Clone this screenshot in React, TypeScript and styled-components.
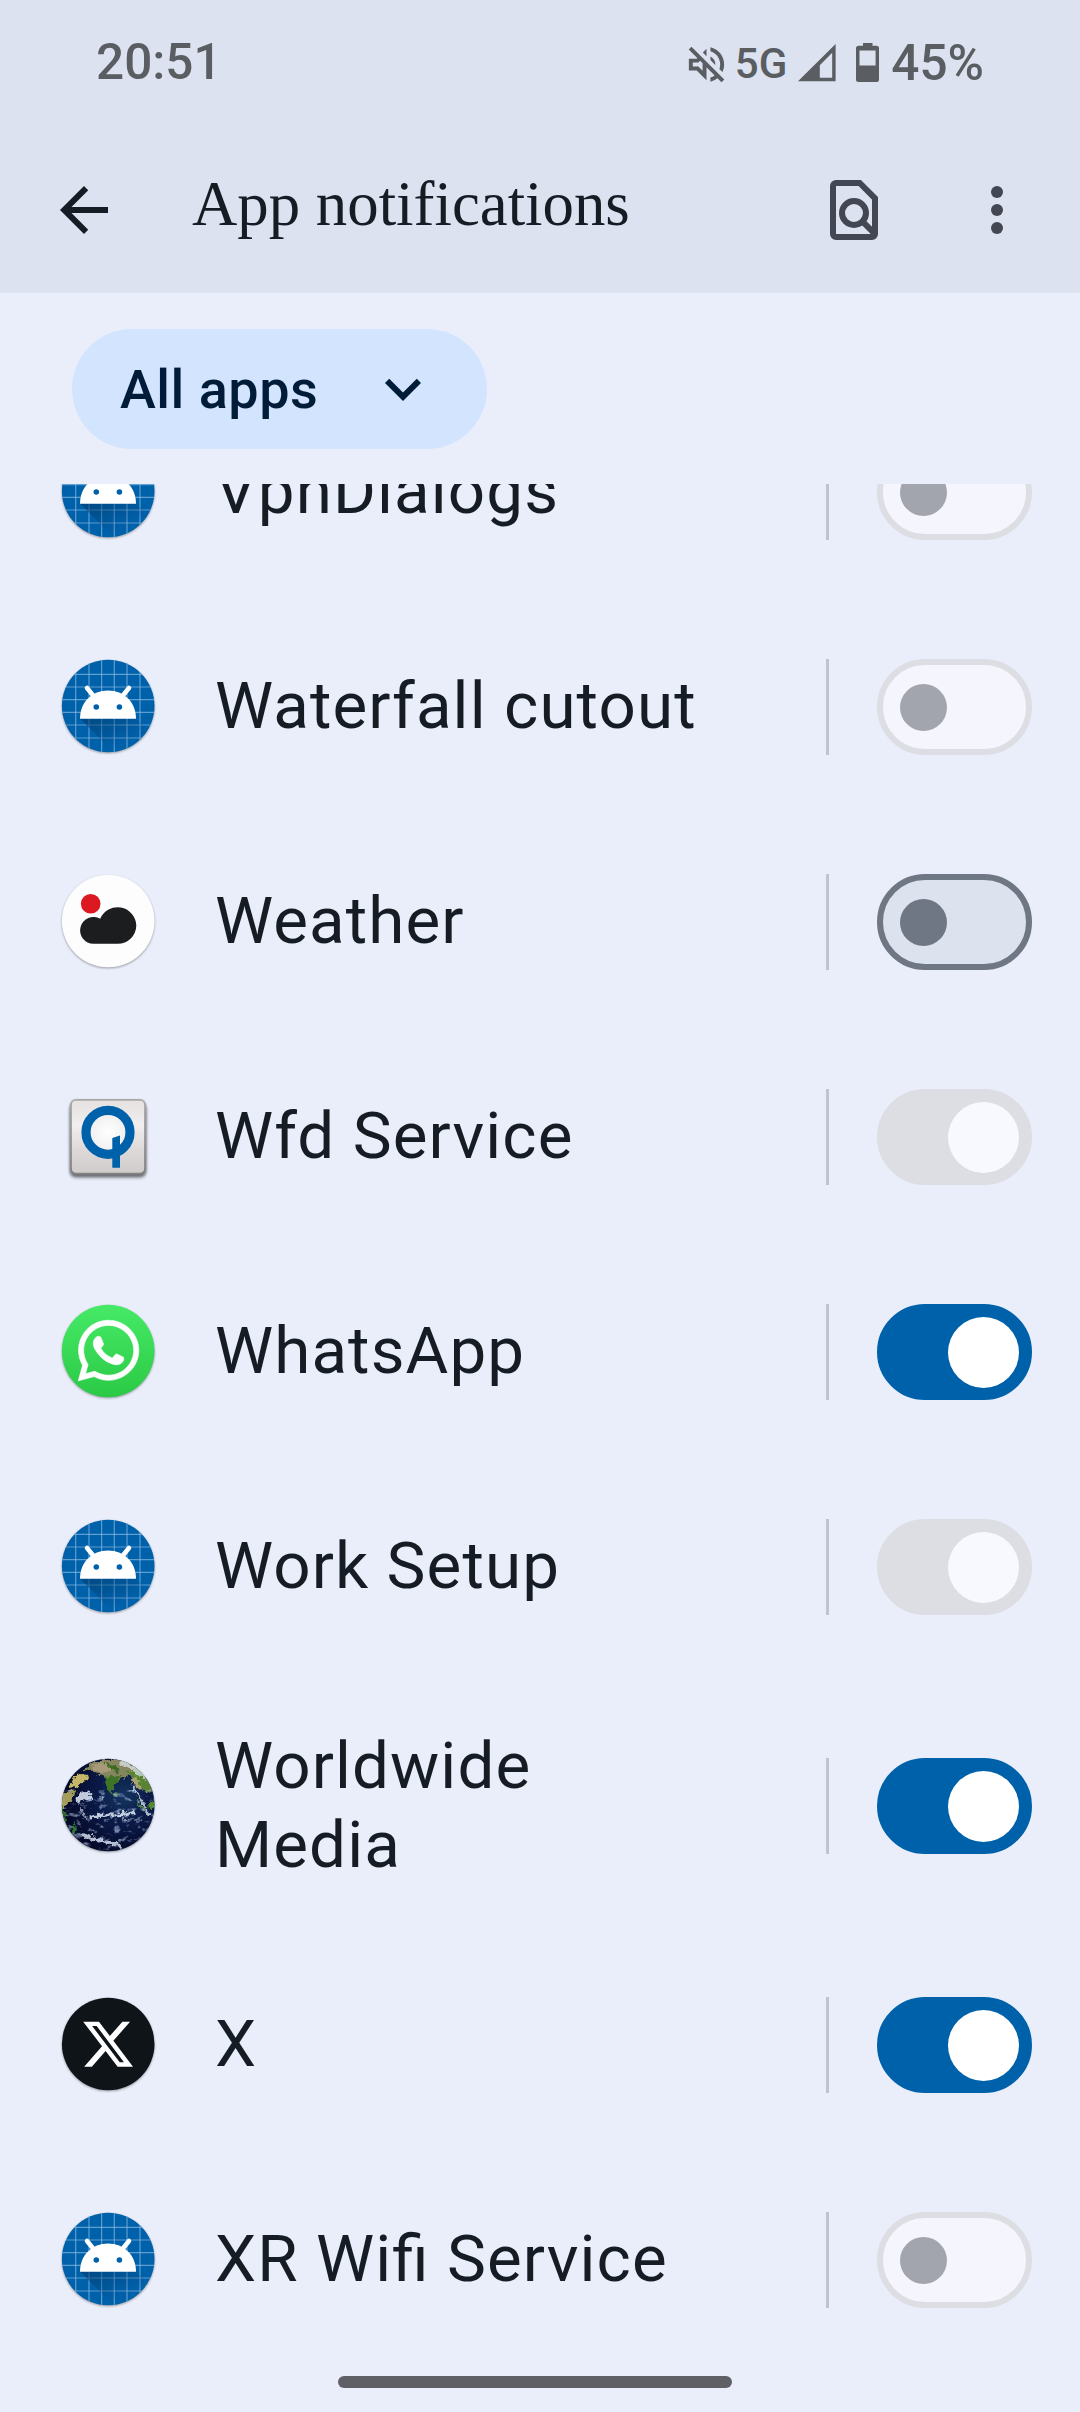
import React, { useState } from 'react';
import styled, { createGlobalStyle, css } from 'styled-components';
import { FaWhatsapp } from 'react-icons/fa';

const GlobalStyle = createGlobalStyle`
  *, *::before, *::after { box-sizing: border-box; }
  body { margin: 0; background: #e9eefa; }
  button { border: 0; padding: 0; background: none; font: inherit; color: inherit; cursor: pointer; }
  svg { display: block; }
`;

const Screen = styled.div`
  display: flex;
  flex-direction: column;
  width: 1080px;
  height: 2412px;
  overflow: hidden;
  background: #e9eefa;
  color: #161c24;
  font-family: Roboto, 'Noto Sans', sans-serif;
`;

const Header = styled.header`
  flex: none;
  height: 293px;
  background: #dce2f0;
`;

const StatusBar = styled.div`
  display: flex;
  justify-content: space-between;
  align-items: center;
  height: 124px;
  padding: 0 96px;
  color: #5a5d61;
  font-weight: 500;
  font-size: 49.5px;
  line-height: 1;
`;

const Clock = styled.span`
  padding-top: 2px;
`;

const StatusIcons = styled.div`
  display: flex;
  align-items: center;
  padding-top: 4px;
`;

const NetworkType = styled.span`
  margin-left: 5px;
  font-size: 42px;
`;

const SignalIcon = styled.svg`
  margin-left: 11px;
`;

const BatteryIcon = styled.svg`
  margin: 0 12px 0 20px;
`;

const Toolbar = styled.div`
  display: flex;
  align-items: center;
  height: 169px;
  padding: 3px 47px 0 48px;
`;

const IconButton = styled.button`
  display: flex;
  width: 72px;
  height: 72px;
  color: #424753;
`;

const BackButton = styled(IconButton)`
  color: #161c24;
`;

const Title = styled.h1`
  flex: 1;
  margin: 0 0 13px 72px;
  font-family: 'Liberation Serif', serif;
  font-weight: 400;
  font-size: 62.8px;
  line-height: 80px;
`;

const Actions = styled.div`
  display: flex;
  gap: 71px;
`;

const FilterBar = styled.div`
  flex: none;
  height: 191px;
  padding: 36px 72px 0;
`;

const FilterChip = styled.button`
  display: flex;
  align-items: center;
  justify-content: space-between;
  width: 415px;
  height: 120px;
  padding: 0 48px;
  border-radius: 60px;
  background: #d3e4ff;
  color: #001c38;
  font-weight: 500;
  font-size: 54px;
  letter-spacing: 0.5px;
`;

const List = styled.ul`
  flex: 1;
  margin: 0;
  padding: 0;
  overflow: hidden;
  list-style: none;
`;

const Row = styled.li<{ $tall?: boolean }>`
  display: flex;
  align-items: center;
  height: ${(p) => (p.$tall ? 263 : 215)}px;
  padding: 1px 48px 0 60px;

  &:first-child { margin-top: -100px; }
`;

const AppIcon = styled.svg`
  flex: none;
  width: 96px;
  height: 96px;
  overflow: visible;
  filter: drop-shadow(0 1.5px 1px rgba(0, 0, 0, 0.35));
`;

const AppName = styled.span`
  width: 531px;
  margin-left: 59px;
  padding-bottom: 3px;
  font-size: 65.5px;
  line-height: 79px;
  letter-spacing: 1.1px;
  font-feature-settings: 'liga' 1;
`;

const NameText = styled.span<{ $narrow?: boolean }>`
  display: block;
  width: ${(p) => (p.$narrow ? '400px' : 'auto')};
`;

const Divider = styled.span`
  width: 3px;
  height: 96px;
  margin-left: 80px;
  background: #c0c4d1;
`;

type Tone = { on: boolean; locked: boolean };

const trackColors = ({ on, locked }: Tone) => {
  if (on) return locked ? ['#dddee3', '#dddee3'] : ['#0061ab', '#0061ab'];
  return locked ? ['#f4f5fd', '#dddee3'] : ['#dce2ee', '#707784'];
};

const thumbColor = ({ on, locked }: Tone) => {
  if (on) return locked ? '#f8f9fe' : '#ffffff';
  return locked ? '#a2a5ae' : '#707784';
};

const Track = styled.button<{ $tone: Tone }>`
  display: flex;
  align-items: center;
  flex: none;
  width: 155px;
  height: 96px;
  margin-left: 48px;
  border-radius: 48px;
  ${({ $tone }) => {
    const [fill, edge] = trackColors($tone);
    return css`
      justify-content: ${$tone.on ? 'flex-end' : 'flex-start'};
      padding: ${$tone.on ? '0 7px' : '0 17px'};
      border: 6px solid ${edge};
      background: ${fill};
    `;
  }}
`;

const Thumb = styled.span<{ $tone: Tone }>`
  width: ${({ $tone }) => ($tone.on ? 71 : 47)}px;
  height: ${({ $tone }) => ($tone.on ? 71 : 47)}px;
  border-radius: 50%;
  background: ${({ $tone }) => thumbColor($tone)};
`;

const NavArea = styled.div`
  flex: none;
  display: flex;
  justify-content: center;
  height: 36px;
  margin-right: 10px;
`;

const NavHandle = styled.span`
  width: 394px;
  height: 12px;
  border-radius: 6px;
  background: #5f6065;
`;

const gridX = [15.7, 29, 41.6, 54.3, 67, 80];
const gridY = [15.3, 28, 40.7, 53.3, 66, 79];

function AndroidIcon({ id }: { id: string }) {
  return (
    <AppIcon viewBox="0 0 96 96">
      <defs>
        <clipPath id={`${id}-clip`}>
          <circle cx="48.2" cy="47" r="46.3" />
        </clipPath>
        <linearGradient id={`${id}-shade`} x1="36" y1="56" x2="54" y2="90" gradientUnits="userSpaceOnUse">
          <stop offset="0" stopColor="#003a6b" stopOpacity="0.6" />
          <stop offset="1" stopColor="#003a6b" stopOpacity="0" />
        </linearGradient>
      </defs>
      <g clipPath={`url(#${id}-clip)`}>
        <rect width="96" height="96" fill="#0061ab" />
        <g stroke="#8fbde4" strokeOpacity="0.65" strokeWidth="1.2">
          {gridX.map((x) => (
            <line key={x} x1={x} x2={x} y1="0" y2="96" />
          ))}
          {gridY.map((y) => (
            <line key={y} x1="0" x2="96" y1={y} y2={y} />
          ))}
        </g>
        <path d="M20 59.5H76L92 76V96H56Z" fill={`url(#${id}-shade)`} />
      </g>
      <path d="M20 59.8C20 43 32 31.4 48 31.4S76 43 76 59.8Z" fill="#fff" />
      <path d="M27 29 34 37.5M69 29 62 37.5" stroke="#fff" strokeWidth="4.6" strokeLinecap="round" />
      <circle cx="36.3" cy="48" r="2.8" fill="#0061ab" />
      <circle cx="59.4" cy="48" r="2.8" fill="#0061ab" />
    </AppIcon>
  );
}

function WeatherIcon() {
  return (
    <AppIcon viewBox="0 0 96 96">
      <circle cx="48.2" cy="47" r="46.3" fill="#fdfdfd" />
      <circle cx="30.7" cy="29.7" r="9.8" fill="#dc1821" />
      <path
        d="M33.4 69.8A13.4 13.4 0 1 1 40.2 44.8A18.8 18.8 0 0 1 76.3 51.3A18.6 18.6 0 0 1 57.7 69.8Z"
        fill="#1c1d1f"
      />
    </AppIcon>
  );
}

function WfdIcon() {
  return (
    <AppIcon viewBox="0 0 96 96">
      <defs>
        <linearGradient id="wfd-face" x1="0" y1="0" x2="0" y2="1">
          <stop offset="0" stopColor="#e4e1e0" />
          <stop offset="0.35" stopColor="#f0eeee" />
          <stop offset="0.7" stopColor="#dcd8d7" />
          <stop offset="1" stopColor="#d0cccb" />
        </linearGradient>
        <linearGradient id="wfd-edge" x1="0" y1="0" x2="0" y2="1">
          <stop offset="0" stopColor="#aba9a8" />
          <stop offset="1" stopColor="#858382" />
        </linearGradient>
        <radialGradient id="wfd-glow">
          <stop offset="0" stopColor="#ffffff" />
          <stop offset="1" stopColor="#efeded" />
        </radialGradient>
        <filter id="wfd-soft" x="-20%" y="-20%" width="140%" height="140%">
          <feGaussianBlur stdDeviation="1.8" />
        </filter>
      </defs>
      <rect x="10" y="14" width="76" height="74" rx="6" fill="#55565b" opacity="0.7" filter="url(#wfd-soft)" />
      <rect x="11" y="10.8" width="74" height="73.8" rx="5" fill="url(#wfd-face)" stroke="url(#wfd-edge)" strokeWidth="1.8" />
      <circle cx="48" cy="43.3" r="22" fill="url(#wfd-glow)" stroke="#0061ab" strokeWidth="9.2" />
      <path d="M52.3 49 60 46.6V78.7H52.3Z" fill="#0061ab" />
    </AppIcon>
  );
}

function WhatsAppIcon() {
  return (
    <AppIcon viewBox="0 0 96 96">
      <defs>
        <linearGradient id="wa-fill" x1="0" y1="0" x2="0" y2="1">
          <stop offset="0" stopColor="#46ea66" />
          <stop offset="1" stopColor="#2bc946" />
        </linearGradient>
      </defs>
      <circle cx="48.2" cy="47" r="46.3" fill="url(#wa-fill)" />
      <FaWhatsapp x="14" y="12" size={69.1} color="#fff" strokeWidth="5" />
    </AppIcon>
  );
}

function GlobeIcon() {
  return (
    <AppIcon viewBox="0 0 96 96">
      <defs>
        <clipPath id="globe-clip">
          <circle cx="48.2" cy="47" r="46.3" />
        </clipPath>
        <radialGradient id="globe-sea" cx="0.66" cy="0.4" r="0.6">
          <stop offset="0" stopColor="#143560" />
          <stop offset="0.45" stopColor="#0a1a48" />
          <stop offset="1" stopColor="#050a2a" />
        </radialGradient>
        <filter id="globe-clouds" x="0" y="0" width="100%" height="100%" colorInterpolationFilters="sRGB">
          <feTurbulence type="fractalNoise" baseFrequency="0.13 0.2" numOctaves="4" seed="8" />
          <feColorMatrix values="0 0 0 0 0.75  0 0 0 0 0.82  0 0 0 0 0.95  4 0 0 0 -2.2" />
        </filter>
        <filter id="globe-rough" x="-10%" y="-10%" width="120%" height="120%" colorInterpolationFilters="sRGB">
          <feTurbulence type="fractalNoise" baseFrequency="0.2" numOctaves="3" seed="3" result="n" />
          <feDisplacementMap in="SourceGraphic" in2="n" scale="8" xChannelSelector="R" yChannelSelector="G" />
          <feGaussianBlur stdDeviation="0.6" />
        </filter>
      </defs>
      <g clipPath="url(#globe-clip)">
        <rect width="96" height="96" fill="url(#globe-sea)" />
        <g filter="url(#globe-rough)">
          <path d="M8 30 14 20 17 14 22 17 29 18 24 24 16 29Z" fill="#c6b668" />
          <path d="M24 12 34 2H76L94 24V34L84 33 76 25 70 18 62 20 55 25 52 35 48 31 44 18 34 14Z" fill="#85855f" />
          <path d="M44 19 60 17 59 22 54 28 51 37 47 29Z" fill="#3f7426" />
          <path d="M30 9 44 3 54 10 42 15Z" fill="#a89a78" />
          <path d="M42 3 56 8 60 14 52 12Z" fill="#3a6b21" />
          <path d="M66 14 80 10 92 27 90 35 80 29 74 20Z" fill="#588432" />
          <path d="M70 20 77 19 82 34 76 29Z" fill="#a7a56d" />
          <circle cx="54.8" cy="36.5" r="1.8" fill="#3f7426" />
          <path d="M2 36 16 32 12 40 5 48 1 53Z" fill="#a49c5a" />
          <path d="M1 49 5 52 6 64 2 64Z" fill="#2d6b2a" />
          <path d="M10 67 15 64 16 73 12 79Z" fill="#2c7a35" />
          <path d="M75 41 79 44 86 53 83 54Z" fill="#5c8c46" />
          <path d="M89 46 94 43V51L90 52Z" fill="#538a2a" />
        </g>
        <g fill="none" stroke="#e3ebf7" strokeLinecap="round" filter="url(#globe-rough)">
          <path d="M20 40 27 38" strokeWidth="9" strokeOpacity="0.85" />
          <path d="M31 60C42 54 55 60 74 54" strokeWidth="3" strokeOpacity="0.85" />
          <path d="M23 77C36 84 52 82 62 89" strokeWidth="3.5" strokeOpacity="0.8" />
          <path d="M72 27 77 36 84 46 88 55" strokeWidth="2.6" strokeOpacity="0.75" />
          <path d="M62 4 72 9 84 18" strokeWidth="5" strokeOpacity="0.7" />
          <path d="M21 51 26 60M45 42 40 38" strokeWidth="2" strokeOpacity="0.6" />
          <path d="M58 56 66 63 84 63" strokeWidth="1.2" strokeOpacity="0.6" />
        </g>
        <rect y="32" width="96" height="64" filter="url(#globe-clouds)" opacity="0.6" />
      </g>
    </AppIcon>
  );
}

function XIcon() {
  return (
    <AppIcon viewBox="0 0 96 96">
      <circle cx="48.2" cy="47" r="46.3" fill="#0f1418" />
      <path
        transform="translate(23.2 22.3) scale(2.075)"
        fill="#fff"
        d="M18.901 1.153h3.68l-8.04 9.19L24 22.846h-7.406l-5.8-7.584-6.638 7.584H.474l8.6-9.83L0 1.154h7.594l5.243 6.932ZM17.61 20.644h2.039L6.486 3.24H4.298Z"
      />
    </AppIcon>
  );
}

type App = {
  name: string;
  icon: React.ReactNode;
  on: boolean;
  locked: boolean;
  wraps?: boolean;
};

const apps: App[] = [
  { name: 'VpnDialogs', icon: <AndroidIcon id="vpn" />, on: false, locked: true },
  { name: 'Waterfall cutout', icon: <AndroidIcon id="waterfall" />, on: false, locked: true },
  { name: 'Weather', icon: <WeatherIcon />, on: false, locked: false },
  { name: 'Wfd Service', icon: <WfdIcon />, on: true, locked: true },
  { name: 'WhatsApp', icon: <WhatsAppIcon />, on: true, locked: false },
  { name: 'Work Setup', icon: <AndroidIcon id="work" />, on: true, locked: true },
  { name: 'Worldwide Media', icon: <GlobeIcon />, on: true, locked: false, wraps: true },
  { name: 'X', icon: <XIcon />, on: true, locked: false },
  { name: 'XR Wifi Service', icon: <AndroidIcon id="xr" />, on: false, locked: true },
];

function AppRow({ app }: { app: App }) {
  const [on, setOn] = useState(app.on);
  const tone = { on, locked: app.locked };
  return (
    <Row $tall={app.wraps}>
      {app.icon}
      <AppName>
        <NameText $narrow={app.wraps}>{app.name}</NameText>
      </AppName>
      <Divider />
      <Track
        role="switch"
        aria-checked={on}
        aria-label={app.name}
        disabled={app.locked}
        $tone={tone}
        onClick={() => setOn(!on)}
      >
        <Thumb $tone={tone} />
      </Track>
    </Row>
  );
}

export default function App() {
  return (
    <>
      <GlobalStyle />
      <Screen>
        <Header>
          <StatusBar>
            <Clock>20:51</Clock>
            <StatusIcons>
              <svg width="47" height="47" viewBox="0 0 24 24" fill="currentColor">
                <path d="M4.34 2.93 2.93 4.34 7.29 8.7 7 9H3v6h4l5 5v-6.59l4.18 4.18c-.65.49-1.38.88-2.18 1.11v2.06a8.94 8.94 0 0 0 3.61-1.75l2.05 2.05 1.41-1.41zM10 15.17 7.83 13H5v-2h2.83l.88-.88L10 11.41zM19 12c0 .82-.15 1.61-.41 2.34l1.53 1.53c.56-1.17.88-2.48.88-3.87 0-4.28-2.99-7.86-7-8.77v2.06c2.89.86 5 3.54 5 6.71m-7-8-1.88 1.88L12 7.76zm4.5 8A4.5 4.5 0 0 0 14 7.97v1.79l2.48 2.48c.01-.08.02-.16.02-.24" />
              </svg>
              <NetworkType>5G</NetworkType>
              <SignalIcon width="38" height="48" viewBox="0 0 38 48" fill="currentColor" fillRule="evenodd">
                <path d="M0 41.3 37.6 4V41.3ZM21.8 25.2V37.7H34.2V12.8Z" />
              </SignalIcon>
              <BatteryIcon width="23" height="48" viewBox="0 0 23 48" fill="currentColor" fillRule="evenodd">
                <path d="M7 3H16.5V5.7H20.5A2.5 2.5 0 0 1 23 8.2V39.5A2.5 2.5 0 0 1 20.5 42H2.5A2.5 2.5 0 0 1 0 39.5V8.2A2.5 2.5 0 0 1 2.5 5.7H7ZM3.5 10.5V25.4H19.6V10.5Z" />
              </BatteryIcon>
              <span>45%</span>
            </StatusIcons>
          </StatusBar>
          <Toolbar>
            <BackButton aria-label="Back">
              <svg width="72" height="72" viewBox="0 0 24 24" fill="currentColor">
                <path d="M20 11H7.83l5.59-5.59L12 4l-8 8 8 8 1.41-1.41L7.83 13H20z" />
              </svg>
            </BackButton>
            <Title>App notifications</Title>
            <Actions>
              <IconButton aria-label="Search">
                <svg width="72" height="72" viewBox="0 0 24 24" fill="none" stroke="currentColor" strokeWidth="2">
                  <path d="M13.9 3H6a1 1 0 0 0-1 1v16a1 1 0 0 0 1 1h12a1 1 0 0 0 1-1V8.1Z" />
                  <circle cx="12" cy="13" r="4" />
                  <path d="m14.8 15.8 4 4" />
                </svg>
              </IconButton>
              <IconButton aria-label="More options">
                <svg width="72" height="72" viewBox="0 0 24 24" fill="currentColor">
                  <circle cx="12" cy="6" r="2" />
                  <circle cx="12" cy="12" r="2" />
                  <circle cx="12" cy="18" r="2" />
                </svg>
              </IconButton>
            </Actions>
          </Toolbar>
        </Header>
        <FilterBar>
          <FilterChip>
            All apps
            <svg width="72" height="72" viewBox="0 0 24 24" fill="currentColor">
              <path d="M16.59 8.59 12 13.17 7.41 8.59 6 10l6 6 6-6z" />
            </svg>
          </FilterChip>
        </FilterBar>
        <List>
          {apps.map((app) => (
            <AppRow key={app.name} app={app} />
          ))}
        </List>
        <NavArea>
          <NavHandle />
        </NavArea>
      </Screen>
    </>
  );
}
